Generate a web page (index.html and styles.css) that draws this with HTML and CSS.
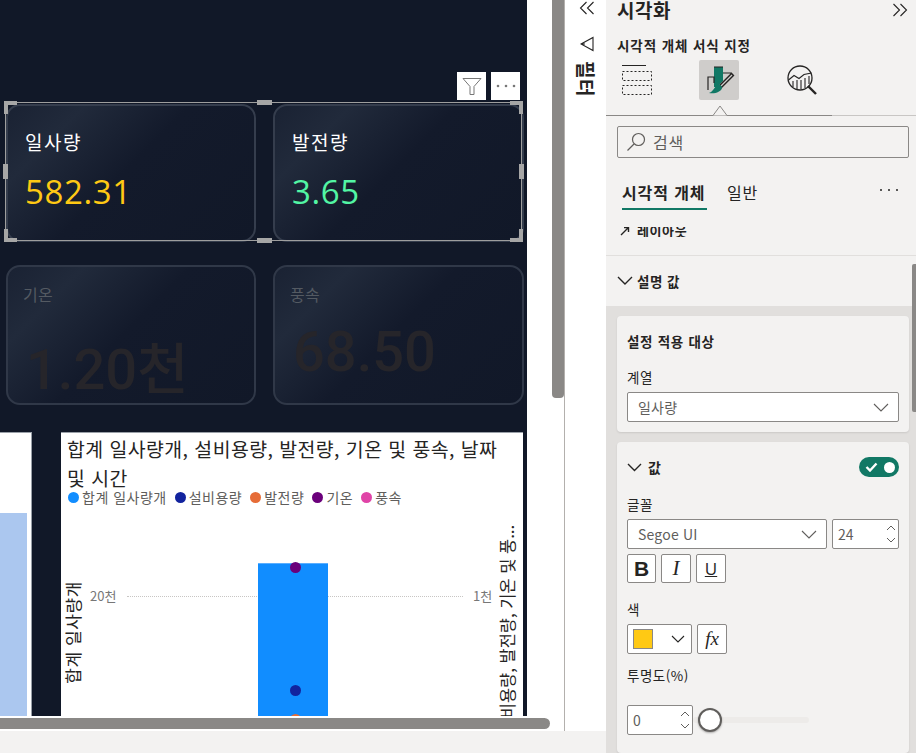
FILE: index.html
```html
<!DOCTYPE html>
<html lang="ko">
<head>
<meta charset="utf-8">
<title>시각화</title>
<link rel="stylesheet" href="styles.css">
</head>
<body>
<div class="app">
  <div class="left">
    <div class="workspace">
      <div class="report">
        <div class="canvas">
          <div class="kpi-grid">
            <div class="kpi kpi-on">
              <div class="kpi-label">일사량</div>
              <div class="kpi-value yellow">582.31</div>
            </div>
            <div class="kpi kpi-on">
              <div class="kpi-label">발전량</div>
              <div class="kpi-value green">3.65</div>
            </div>
            <div class="kpi kpi-off">
              <div class="kpi-label dim">기온</div>
              <div class="kpi-value big dimval tall">1.20천</div>
            </div>
            <div class="kpi kpi-off">
              <div class="kpi-label dim">풍속</div>
              <div class="kpi-value big dimval">68.50</div>
            </div>
          </div>
          <div class="visual-tools">
            <div class="tool"><svg width="20" height="20" viewBox="0 0 20 20"><path d="M1 2.500h18l-7 8v8h-4v-8z" fill="none" stroke="#777" stroke-width="1"/></svg></div>
            <div class="tool"><svg width="20" height="4" viewBox="0 0 20 4"><circle cx="2" cy="2" r="1.300" fill="#777"/><circle cx="10" cy="2" r="1.300" fill="#777"/><circle cx="18" cy="2" r="1.300" fill="#777"/></svg></div>
          </div>
          <div class="selection">
            <i class="h tl1"></i><i class="h tl2"></i><i class="h tr1"></i><i class="h tr2"></i>
            <i class="h bl1"></i><i class="h bl2"></i><i class="h br1"></i><i class="h br2"></i>
            <i class="h tm"></i><i class="h bm"></i><i class="h lm"></i><i class="h rm"></i>
          </div>
          <div class="charts">
            <div class="chart-stub"><div class="stub-bar"></div></div>
            <div class="chart">
              <div class="chart-title">합계 일사량개, 설비용량, 발전량, 기온 및 풍속, 날짜 및 시간</div>
              <div class="legend">
                <span class="lg"><b class="dot c-blue"></b>합계 일사량개</span>
                <span class="lg"><b class="dot c-navy"></b>설비용량</span>
                <span class="lg"><b class="dot c-orange"></b>발전량</span>
                <span class="lg"><b class="dot c-purple"></b>기온</span>
                <span class="lg"><b class="dot c-pink"></b>풍속</span>
              </div>
              <div class="axis-title axis-left">합계 일사량개</div>
              <div class="axis-title axis-right">설비용량, 발전량, 기온 및 풍...</div>
              <div class="tick tick-l">20천</div>
              <div class="tick tick-r">1천</div>
              <div class="gridline"></div>
              <div class="bar"></div>
              <b class="mark c-purple m1"></b>
              <b class="mark c-navy m2"></b>
              <b class="mark c-orange m3"></b>
            </div>
          </div>
        </div>
        <div class="hscroll"><div class="hthumb"></div></div>
      </div>
      <div class="vscroll"><div class="vthumb"></div></div>
      <div class="rail">
        <svg class="rail-chev" width="16" height="14" viewBox="0 0 16 14"><path d="M7.500 1 1.500 7l6 6M14.500 1l-6 6 6 6" fill="none" stroke="#252423" stroke-width="1.100"/></svg>
        <svg class="rail-flag" width="14" height="16" viewBox="0 0 14 16"><path d="M1 8 13 1.500v13L1 8zM1 8h4" fill="none" stroke="#252423" stroke-width="1.100"/></svg>
        <div class="rail-label">필터</div>
      </div>
    </div>
    <div class="footer"></div>
  </div>

  <aside class="panel">
    <div class="panel-head">
      <div class="panel-title">시각화</div>
      <svg width="16" height="14" viewBox="0 0 16 14"><path d="M1.500 1 7.500 7l-6 6M8.500 1l6 6-6 6" fill="none" stroke="#252423" stroke-width="1.100"/></svg>
    </div>
    <div class="panel-sub">시각적 개체 서식 지정</div>
    <div class="mode-row">
      <div class="mode mode-a">
        <svg width="32" height="32" viewBox="0 0 32 32"><path d="M0 1.500h24" stroke="#252423" fill="none"/><path d="M.5 7.500h29v9h-29zM.5 21.500h29v9h-29z" stroke="#252423" stroke-dasharray="2 2" fill="none"/></svg>
      </div>
      <div class="mode mode-on">
        <svg width="32" height="32" viewBox="0 0 32 32"><path d="M11 3h9v14l-6 6h-3z" fill="#117865"/><path d="M11 3h9M5 26V13h6v6M20 9h8v3" fill="none" stroke="#252423" stroke-width="1.200"/><path d="M30 10 17 23" stroke="#252423" stroke-width="4"/><path d="M29 11 18 22" stroke="#cfcdcb" stroke-width="1.200"/><path d="M14 20c3 0 5 2 5 4-1 4-7 6-13 5 3-1 5-4 8-9z" fill="#117865"/></svg>
      </div>
      <div class="mode mode-c">
        <svg width="30" height="30" viewBox="0 0 30 30"><circle cx="13" cy="13" r="12" fill="none" stroke="#252423" stroke-width="1.300"/><path d="M1.500 15 7 10.500l5 3 5-4 7.500-1.500M6 16v6M10 15v9M14 15v9M18 13v10M22 11v8" fill="none" stroke="#252423" stroke-width="1.100"/><path d="M21 21 29 29" stroke="#252423" stroke-width="2.400"/></svg>
      </div>
    </div>
    <div class="mode-rule">
      <svg class="notch" width="22" height="11" viewBox="0 0 22 11"><path d="M0 10.500h4L11 1l7 9.500h4" fill="#f3f2f1" stroke="#8a8886"/></svg>
    </div>
    <label class="search">
      <svg width="20" height="20" viewBox="0 0 20 20"><circle cx="12.500" cy="7.500" r="6" fill="none" stroke="#605e5c" stroke-width="1.200"/><path d="M8 12 1.500 18.500" stroke="#605e5c" stroke-width="1.200"/></svg>
      <span class="search-text">검색</span>
    </label>
    <div class="tabs">
      <div class="tab tab-on">시각적 개체</div>
      <div class="tab">일반</div>
      <svg class="tabs-more" width="20" height="4" viewBox="0 0 20 4"><circle cx="2" cy="2" r="1" fill="#252423"/><circle cx="10" cy="2" r="1" fill="#252423"/><circle cx="18" cy="2" r="1" fill="#252423"/></svg>
    </div>
    <div class="clip-row">
      <div class="clip-inner">
        <svg width="10" height="10" viewBox="0 0 10 10"><path d="M1 9 8 2M4 1.500h4.500V6" fill="none" stroke="#252423" stroke-width="1.400"/></svg>
        <span>레이아웃</span>
      </div>
    </div>
    <div class="section-head">
      <svg width="16" height="10" viewBox="0 0 16 10"><path d="M1 1l7 7 7-7" fill="none" stroke="#252423" stroke-width="1.400"/></svg>
      <span>설명 값</span>
    </div>
    <div class="well">
      <div class="card card-a">
        <div class="card-h">설정 적용 대상</div>
        <div class="field-label">계열</div>
        <div class="select">
          <span>일사량</span>
          <svg width="16" height="9" viewBox="0 0 16 9"><path d="M1 1l7 7 7-7" fill="none" stroke="#605e5c" stroke-width="1.100"/></svg>
        </div>
      </div>
      <div class="card card-b">
        <div class="val-head">
          <svg width="15" height="9" viewBox="0 0 15 9"><path d="M1 1l6.500 6.500L14 1" fill="none" stroke="#252423" stroke-width="1.400"/></svg>
          <span class="val-title">값</span>
          <div class="toggle">
            <svg width="13" height="10" viewBox="0 0 13 10"><path d="M1.500 5 5 8.500 11.500 1.500" fill="none" stroke="#fff" stroke-width="2.400"/></svg>
            <b class="knob"></b>
          </div>
        </div>
        <div class="field-label fl-font">글꼴</div>
        <div class="font-row">
          <div class="select select-font">
            <span>Segoe UI</span>
            <svg width="16" height="9" viewBox="0 0 16 9"><path d="M1 1l7 7 7-7" fill="none" stroke="#605e5c" stroke-width="1.100"/></svg>
          </div>
          <div class="spin spin-size">
            <span>24</span>
            <svg width="10" height="18" viewBox="0 0 10 18"><path d="M1 5l4-4 4 4M1 13l4 4 4-4" fill="none" stroke="#605e5c"/></svg>
          </div>
        </div>
        <div class="style-row">
          <div class="sbtn s-b">B</div>
          <div class="sbtn s-i">I</div>
          <div class="sbtn s-u">U</div>
        </div>
        <div class="field-label fl-color">색</div>
        <div class="color-row">
          <div class="swatch-btn">
            <b class="swatch"></b>
            <svg width="14" height="8" viewBox="0 0 14 8"><path d="M1 1l6 6 6-6" fill="none" stroke="#252423" stroke-width="1.100"/></svg>
          </div>
          <div class="fx">fx</div>
        </div>
        <div class="field-label fl-opacity">투명도(%)</div>
        <div class="slider-row">
          <div class="spin spin-op">
            <span>0</span>
            <svg width="10" height="18" viewBox="0 0 10 18"><path d="M1 5l4-4 4 4M1 13l4 4 4-4" fill="none" stroke="#605e5c"/></svg>
          </div>
          <div class="slider"><b class="thumb"></b></div>
        </div>
      </div>
    </div>
    <div class="panel-scroll"></div>
  </aside>
</div>
</body>
</html>
```
FILE: styles.css
```css
* { box-sizing: border-box; }
html, body { margin: 0; height: 100%; overflow: hidden; }
body { font-family: "Noto Sans CJK KR", "Noto Sans", sans-serif; color: #252423; background: #fff; }
b, i { display: block; font-style: normal; }

.app { display: flex; width: 916px; height: 753px; }
.left { width: 606px; display: flex; flex-direction: column; flex: none; }
.workspace { flex: none; height: 731px; display: flex; background: #fff; }
.footer { flex: 1; background: #f3f2f1; }

.report { width: 552px; flex: none; display: flex; flex-direction: column; }
.canvas { position: relative; width: 527px; height: 716px; background: #111828; overflow: hidden; }
.hscroll { height: 15px; padding-top: 2px; }
.hthumb { width: 550px; height: 11px; background: #8a8886; border-radius: 0 6px 6px 0; }
.vscroll { width: 13px; flex: none; border-right: 1px solid #b3b0ad; }
.vthumb { width: 12px; height: 398px; background: #8a8886; border-radius: 0 0 4px 4px; }

.rail { width: 41px; flex: none; display: flex; flex-direction: column; align-items: center; background: #fff; }
.rail-chev { margin-top: 1px; margin-left: 2px; }
.rail-flag { margin-top: 21px; margin-left: 2px; }
.rail-label { margin-top: 9px; margin-left: 2px; writing-mode: vertical-rl; text-orientation: sideways; font-size: 19px; font-weight: 700; line-height: 21px; letter-spacing: .5px; }

.kpi-grid { display: grid; grid-template-columns: 250px 251px; grid-template-rows: 138px 140px; column-gap: 17px; row-gap: 23px; margin: 104px 0 0 6px; }
.kpi { border-radius: 14px; padding: 24px 17px 0; background: linear-gradient(135deg, #1a2233 0%, #212a3b 20%, #131a2b 48%, #111828 100%); border: 2px solid #353d4d; }
.kpi-off { padding: 15px 15px 0; border-color: #303848; }
.kpi-label { font-size: 19px; line-height: 24px; letter-spacing: 1.500px; color: #fff; }
.kpi-label.dim { font-size: 16px; letter-spacing: .4px; color: #545a62; }
.kpi-value { font-family: "Open Sans", sans-serif; font-size: 33px; line-height: 44px; letter-spacing: .6px; margin-top: 16px; }
.kpi-value.yellow { color: #ffc914; }
.kpi-value.green { color: #52f5a4; }
.kpi-value.big { font-family: "Roboto", "Noto Sans CJK KR", sans-serif; font-size: 56px; line-height: 62px; letter-spacing: 0; font-weight: 500; color: #26252a; margin: 15px 0 0 3px; }
.kpi-value.tall { margin-top: 33px; }

.visual-tools { position: absolute; left: 457px; top: 72px; display: flex; gap: 5px; }
.tool { width: 29px; height: 28px; background: #fff; display: flex; align-items: center; justify-content: center; }

.selection { position: absolute; left: 5px; top: 102px; width: 517px; height: 139px; border: 1px solid #9e9e9e; }
.h { position: absolute; background: #a6a6a6; }
.tl1, .tr1, .bl1, .br1 { width: 13px; height: 4px; }
.tl2, .tr2, .bl2, .br2 { width: 4px; height: 13px; }
.tl1 { left: -2px; top: -2px; } .tl2 { left: -2px; top: -2px; }
.tr1 { right: -2px; top: -2px; } .tr2 { right: -2px; top: -2px; }
.bl1 { left: -2px; bottom: -2px; } .bl2 { left: -2px; bottom: -2px; }
.br1 { right: -2px; bottom: -2px; } .br2 { right: -2px; bottom: -2px; }
.tm, .bm { width: 15px; height: 5px; left: 251px; }
.tm { top: -3px; } .bm { bottom: -3px; }
.lm, .rm { width: 5px; height: 15px; top: 61px; }
.lm { left: -3px; } .rm { right: -3px; }

.charts { display: flex; gap: 29px; height: 284px; margin-top: 27px; }
.chart-stub { position: relative; width: 32px; flex: none; background: #fff; border-top: 1px solid #9aa0a8; border-right: 1px solid #9aa0a8; }
.stub-bar { position: absolute; left: 0; top: 80px; bottom: 0; width: 27px; background: #abc7ef; }
.chart { position: relative; width: 462px; flex: none; background: #fff; border-top: 1px solid #9aa0a8; overflow: hidden; padding: 0 10px 0 6px; }
.chart-title { font-size: 19.400px; line-height: 29px; letter-spacing: .45px; color: #252423; padding-top: 1px; }
.legend { display: flex; gap: 8px; font-size: 14px; line-height: 18px; letter-spacing: .5px; color: #605e5c; margin: -4px 0 0 1px; }
.lg { display: flex; align-items: center; gap: 3px; }
.dot { width: 11px; height: 11px; border-radius: 50%; }
.c-blue { background: #118dff; }
.c-navy { background: #12239e; }
.c-orange { background: #e66c37; }
.c-purple { background: #6b007b; }
.c-pink { background: #e044a7; }

.axis-title { position: absolute; writing-mode: vertical-rl; text-orientation: sideways; transform: rotate(180deg); font-size: 17px; line-height: 20px; letter-spacing: .6px; color: #252423; white-space: nowrap; }
.axis-left { left: 2px; top: 148px; }
.axis-right { left: 436px; top: 92px; font-size: 16.500px; letter-spacing: 0; }
.tick { position: absolute; top: 154px; font-size: 13px; line-height: 18px; color: #777; }
.tick-l { left: 29px; }
.tick-r { left: 412px; }
.gridline { position: absolute; left: 66px; width: 336px; top: 163px; border-top: 1px dotted #c8c6c4; }
.bar { position: absolute; left: 197px; top: 130px; bottom: 0; width: 70px; background: #118dff; border-top: 1px solid #5aaeff; }
.mark { position: absolute; width: 11px; height: 11px; border-radius: 50%; left: 229px; }
.m1 { top: 129px; }
.m2 { top: 252px; }
.m3 { top: 281px; }

.panel { position: relative; width: 310px; flex: none; height: 753px; background: #f3f2f1; overflow: hidden; display: flex; flex-direction: column; }
.panel-head { display: flex; justify-content: space-between; align-items: center; height: 20px; padding: 0 8px 0 11px; }
.panel-title { font-size: 19px; font-weight: 700; line-height: 24px; letter-spacing: .5px; }
.panel-sub { margin: 15px 0 0 11px; font-size: 13.500px; font-weight: 700; line-height: 20px; letter-spacing: .9px; }
.mode-row { display: flex; height: 40px; margin-top: 5px; align-items: center; }
.mode { width: 40px; height: 40px; display: flex; align-items: center; justify-content: center; flex: none; }
.mode-a { justify-content: flex-start; margin-left: 16px; }
.mode-on { background: #cfcdcb; border-radius: 2px; margin-left: 37px; }
.mode-c { margin-left: 43px; }
.mode-rule { position: relative; height: 1px; margin-top: 15px; background: linear-gradient(to right, #8a8886 226px, #c8c6c4 226px); }
.notch { position: absolute; left: 103px; top: -10px; }
.search { display: flex; align-items: center; gap: 7px; height: 32px; margin: 10px 7px 0 11px; padding-left: 8px; background: #f3f2f1; border: 1px solid #8a8886; border-radius: 2px; }
.search-text { font-size: 16px; letter-spacing: .8px; color: #605e5c; }
.tabs { position: relative; display: flex; margin: 22px 0 0 16px; height: 31px; gap: 20px; }
.tab { font-size: 16px; line-height: 24px; letter-spacing: .9px; color: #252423; white-space: nowrap; }
.tab-on { font-weight: 700; width: 85px; height: 30px; border-bottom: 2px solid #117865; }
.tabs-more { position: absolute; right: 17px; top: 8px; }
.clip-row { height: 10px; margin-top: 16px; overflow: hidden; padding-left: 14px; }
.clip-inner { display: flex; align-items: center; gap: 7px; height: 18px; margin-top: -5px; font-size: 13px; font-weight: 700; line-height: 18px; letter-spacing: .6px; }
.section-head { display: flex; align-items: center; gap: 4px; height: 51px; margin-top: 18px; border-top: 1px solid #e1dfdd; padding-left: 11px; font-size: 13.500px; font-weight: 700; letter-spacing: .5px; }
.well { flex: 1; background: #e1dfdd; padding: 10px 7px 0 11px; display: flex; flex-direction: column; gap: 10px; }
.card { background: #f3f2f1; border-radius: 4px; padding: 0 10px; box-shadow: 0 1px 2px rgba(0,0,0,.1); }
.card-a { height: 116px; flex: none; }
.card-h { font-size: 13.500px; font-weight: 700; line-height: 18px; letter-spacing: .7px; padding-top: 16px; height: 34px; }
.field-label { font-size: 13.500px; line-height: 18px; letter-spacing: .5px; color: #252423; }
.card-a .field-label { margin-top: 18px; }
.select { display: flex; align-items: center; justify-content: space-between; height: 30px; background: #fff; border: 1px solid #8a8886; border-radius: 2px; padding: 0 9px 0 10px; font-size: 14px; letter-spacing: .2px; color: #605e5c; margin-top: 6px; }
.card-b { flex: 1; }
.val-head { display: flex; align-items: center; height: 20px; margin-top: 15px; font-size: 14px; font-weight: 700; }
.val-title { margin-left: 6px; }
.toggle { margin-left: auto; display: flex; align-items: center; justify-content: space-between; width: 40px; height: 20px; border-radius: 10px; background: #117865; padding: 0 4px 0 6px; }
.knob { width: 11px; height: 11px; border-radius: 50%; background: #fff; }
.fl-font { margin-top: 18px; }
.font-row { display: flex; gap: 5px; margin-top: 6px; }
.font-row .select { margin-top: 0; width: 200px; }
.spin { display: flex; align-items: center; justify-content: space-between; background: #fff; border: 1px solid #8a8886; border-radius: 2px; height: 30px; padding: 0 2px 0 5px; font-size: 14px; color: #605e5c; }
.spin-size { width: 67px; }
.style-row { display: flex; gap: 5px; margin-top: 5px; }
.sbtn { width: 30px; height: 29px; background: #fff; border: 1px solid #8a8886; border-radius: 2px; display: flex; align-items: center; justify-content: center; font-size: 19px; color: #252423; }
.s-b { width: 29px; font-family: "Liberation Sans", sans-serif; font-weight: 700; font-size: 21px; }
.s-i { font-family: "Liberation Serif", serif; font-style: italic; font-size: 21px; }
.s-u { font-family: "Open Sans", sans-serif; text-decoration: underline; font-size: 17px; }
.fl-color { margin-top: 17px; }
.color-row { display: flex; gap: 5px; margin-top: 6px; }
.swatch-btn { display: flex; align-items: center; justify-content: space-between; width: 65px; height: 30px; background: #fff; border: 1px solid #8a8886; border-radius: 2px; padding: 0 6px 0 5px; }
.swatch { width: 20px; height: 20px; background: #ffc914; border: 1px solid #8a8886; }
.fx { width: 30px; height: 30px; background: #fff; border: 1px solid #8a8886; border-radius: 2px; display: flex; align-items: center; justify-content: center; font-family: "Liberation Serif", serif; font-style: italic; font-size: 19px; }
.fl-opacity { margin-top: 12px; }
.slider-row { display: flex; align-items: center; margin-top: 21px; }
.spin-op { width: 66px; }
.slider { position: relative; width: 116px; height: 6px; background: #edebe9; border-radius: 3px; }
.thumb { position: absolute; left: 5px; top: -9px; width: 24px; height: 24px; border-radius: 50%; background: #fff; border: 2px solid #605e5c; box-shadow: 0 1px 2px rgba(0,0,0,.3); }
.panel-scroll { position: absolute; right: 0; top: 264px; width: 4px; height: 148px; background: #8a8886; border-radius: 2px 0 0 2px; }
```
